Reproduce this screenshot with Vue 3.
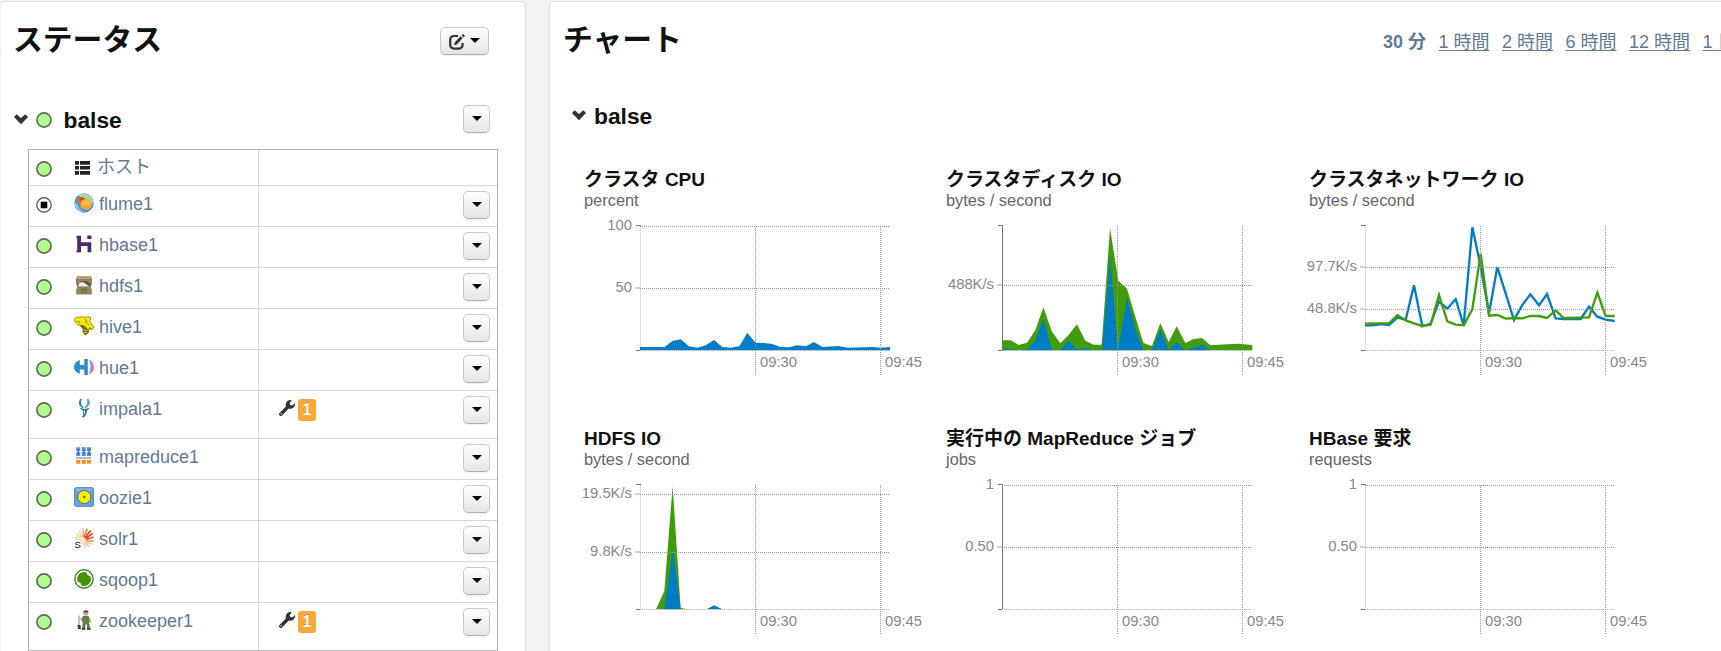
<script setup>
const services = [
  { name: 'ホスト', icon: 'hosts', host: true },
  { name: 'flume1', icon: 'flume', stopped: true },
  { name: 'hbase1', icon: 'hbase' },
  { name: 'hdfs1', icon: 'hdfs' },
  { name: 'hive1', icon: 'hive' },
  { name: 'hue1', icon: 'hue' },
  { name: 'impala1', icon: 'impala', issues: 1 },
  { name: 'mapreduce1', icon: 'mapreduce' },
  { name: 'oozie1', icon: 'oozie' },
  { name: 'solr1', icon: 'solr' },
  { name: 'sqoop1', icon: 'sqoop' },
  { name: 'zookeeper1', icon: 'zookeeper', issues: 1 },
]

const ranges = ['1 時間', '2 時間', '6 時間', '12 時間', '1 日']

// Series points are in thirds of a pixel, measured from the plot's top left corner.
const BASE = 373
const charts = [
  {
    title: 'クラスタ CPU', unit: 'percent',
    lines: [{ y: 0, label: '100' }, { y: 187, label: '50' }],
    areas: [{ color: '#007dc5', points: '0,363 60,363 73,364 97,345 122,340 147,361 172,365 197,358 222,342 247,363 272,365 298,361 322,321 347,350 372,351 397,354 421,363 447,364 472,358 498,361 522,348 547,363 595,360 622,365 697,363 721,365 750,363' }],
  },
  {
    title: 'クラスタディスク IO', unit: 'bytes / second', dark: true,
    lines: [{ y: 178, label: '488K/s' }],
    areas: [
      { color: '#419c0b', points: '0,343 26,343 50,357 75,350 100,313 124,244 150,317 175,352 200,327 225,295 250,344 275,356 299,356 324,6 349,164 375,188 400,272 424,351 450,360 475,291 500,348 524,301 550,351 575,339 600,336 625,358 675,355 708,353 751,357' },
      { color: '#007dc5', points: '0,369 25,369 50,373 75,371 100,344 124,279 150,371 175,373 200,344 225,371 250,366 275,372 300,372 324,87 348,373 375,212 400,310 424,373 450,373 475,310 500,373 524,348 550,373 600,356 625,373' },
    ],
  },
  {
    title: 'クラスタネットワーク IO', unit: 'bytes / second',
    lines: [{ y: 123, label: '97.7K/s' }, { y: 249, label: '48.8K/s' }],
    strokes: [
      { color: '#007dc5', points: '0,298 24,298 47,294 72,297 97,275 122,281 147,178 172,301 197,293 222,227 247,248 272,219 296,298 322,4 347,122 372,262 397,123 422,202 447,282 472,237 496,205 522,238 546,204 572,277 596,279 647,279 672,242 697,272 722,281 749,285' },
      { color: '#419c0b', points: '0,293 44,292 72,292 97,268 122,283 147,292 172,300 197,296 222,207 247,286 272,296 296,298 322,250 347,83 372,269 397,267 422,278 447,276 472,277 496,270 522,270 546,276 572,253 596,276 647,275 672,274 697,200 722,270 749,270' },
    ],
  },
  {
    title: 'HDFS IO', unit: 'bytes / second',
    lines: [{ y: 28, label: '19.5K/s' }, { y: 201, label: '9.8K/s' }],
    areas: [
      { color: '#419c0b', points: '48,373 73,318 98,3 122,369 145,373' },
      { color: '#007dc5', points: '73,373 98,193 122,373 200,373 222,361 247,373' },
    ],
  },
  {
    title: '実行中の MapReduce ジョブ', unit: 'jobs', dark: true,
    lines: [{ y: 0, label: '1' }, { y: 187, label: '0.50' }],
  },
  {
    title: 'HBase 要求', unit: 'requests',
    lines: [{ y: 0, label: '1' }, { y: 187, label: '0.50' }],
  },
]

const closed = (pts) => {
  const list = pts.split(' ')
  const first = list[0].split(',')[0]
  const last = list[list.length - 1].split(',')[0]
  return `${first},${BASE} ${pts} ${last},${BASE}`
}
const snap = (y) => Math.round(y / 3) + 0.5
</script>

<template>
  <div class="page">
    <section class="panel status">
      <header class="head">
        <h1>ステータス</h1>
        <button class="btn edit">
          <svg width="16" height="16" viewBox="0 0 16 16">
            <path d="M9 2H5.200Q1.200 2 1.200 6v4.600q0 4 4 4h4.400q4 0 4-4V9" fill="none" stroke="#333" stroke-width="2.200" />
            <path d="M5 11.200l.9-3L11.600 2.300l2 2L8 10.200z" fill="#333" />
            <path d="M12.600 1.400L14 0l2 2-1.400 1.400z" fill="#333" />
          </svg>
          <i class="caret"></i>
        </button>
      </header>

      <div class="cluster">
        <svg class="chev" width="14" height="11" viewBox="0 0 14 11"><path d="M0 3L2.700.2 7 4 11.300.2 14 3 7 10.200z" fill="#333" /></svg>
        <svg class="dot" width="16" height="16" viewBox="0 0 16 16"><circle cx="8" cy="8" r="7.100" fill="#b0fc90" stroke="#5d6b58" stroke-width="1.700" /></svg>
        <h2>balse</h2>
        <button class="btn"><i class="caret"></i></button>
      </div>

      <div class="table">
        <div v-for="s in services" :key="s.name" class="row" :class="{ host: s.host, tall: s.issues }">
          <div class="cell name">
            <svg class="dot" width="16" height="16" viewBox="0 0 16 16">
              <template v-if="s.stopped">
                <circle cx="8" cy="8" r="7.200" fill="#fff" stroke="#666" stroke-width="1.400" />
                <rect x="4.700" y="4.700" width="6.600" height="6.600" fill="#000" />
              </template>
              <circle v-else cx="8" cy="8" r="7.100" fill="#b0fc90" stroke="#5d6b58" stroke-width="1.700" />
            </svg>

            <svg class="icon" width="20" height="20" viewBox="0 0 20 20">
              <g v-if="s.icon === 'hosts'" fill="#222">
                <path d="M1 2h4v3.800H1zM6 2h10v3.800H6zM1 7h4v3.600H1zM6 7h10v3.600H6zM1 12h4v3.800H1zM6 12h10v3.800H6z" />
              </g>
              <g v-else-if="s.icon === 'flume'">
                <circle cx="10" cy="10" r="9.700" fill="#3f93df" />
                <path d="M4 2.500Q10-1.500 16 2.500 20 6.500 19.500 11L11 8z" fill="#b5d3a0" />
                <path d="M1 9q3 2 4 6l5 4q-7 0-9-6z" fill="#7cc4fa" />
                <ellipse cx="7.300" cy="7.500" rx="4.800" ry="3.500" fill="#d9782a" />
                <path d="M4 4.600q3-1 6 1.400l-3 2z" fill="#b5571d" />
                <ellipse cx="12" cy="11.600" rx="5.800" ry="5.300" fill="#f8a52a" />
                <ellipse cx="12" cy="10" rx="4" ry="2.500" fill="#fdbf4e" />
              </g>
              <g v-else-if="s.icon === 'hbase'" fill="#4b2b6f">
                <path d="M3.200 2h3.800v6.200h10.300V18.300h-3.800v-6.200H7v6.200H3.200z" />
                <rect x="13.300" y="1.400" width="4.200" height="3.600" rx=".6" />
                <path d="M2.500 1.700h4.500V4H2.500zM2.500 16.300H7v2H2.500z" />
              </g>
              <g v-else-if="s.icon === 'hdfs'">
                <path d="M3.500 1h13L18 3.500V9l-1 2v2l.8 1.500v5H2.200v-5L3 13v-2L2 9V3.500z" fill="#94825c" />
                <path d="M3.500 1h13L18 4H2z" fill="#b3a27a" />
                <path d="M3.800 9Q10 2.500 16.200 9v2.500H3.800z" fill="#5b5038" />
                <path d="M5.500 7.500l4-.3 6 4.300H4z" fill="#e8edf5" />
                <path d="M7 14.500h6M7 17h6" stroke="#6b5c3b" stroke-width="1" />
              </g>
              <g v-else-if="s.icon === 'hive'">
                <path d="M9.500 12Q8 14 8.500 15.500l2.500 4q2.500-.5 4-3.500l-1-5z" fill="#6a6512" />
                <path d="M9.500 14l4 .5M10 16.500l3.500.3" stroke="#e6dd0a" stroke-width="1" />
                <path d="M5 8.500l5.500.5 3 3-1 1.500-4-.5z" fill="#6f6a10" />
                <path d="M.5 3.500Q1.500.2 5.500 1.200 8-.2 10.500 1.600 14-.4 16.500 1.500 17.500 3 15.500 5q2 1.200 1.800 3.500 3 .8 2.400 3.700-1 1.600-3.200 1-3 1-4.200-1.200Q11 10 9.500 9.500L5 9.200Q.5 7.500.5 3.500z" fill="#f5e905" stroke="#77701a" stroke-width=".7" />
                <path d="M11 3q2 2 1 4M13.500 7.500l1.300 1.300M15 12l2.500.3M3 5l3 1.500" fill="none" stroke="#4d4a12" stroke-width=".8" />
              </g>
              <g v-else-if="s.icon === 'hue'">
                <path d="M5.800 3V8h4.500V2h3.500v16h-3.500v-5.500H5.800v4.500Q0 14.800 0 10T5.800 3z" fill="#2f8bc9" />
                <path d="M14.800 2.500Q20 4.500 20 10t-5.200 7.500q1.500-3 1.500-7.500t-1.500-7.500z" fill="#aa8cc5" />
              </g>
              <g v-else-if="s.icon === 'impala'">
                <path d="M6 1Q3.800 5.500 6 8l3 2.800.8-1.200Q7.500 8 7.200 5.500T7.800 1z" fill="#278aa9" />
                <path d="M14.500 1q2.800 4-.3 7l-2.700 2.500-.8-1.200Q13 7.500 13.200 5T13 1z" fill="#4aa7bf" />
                <path d="M5 9.500l4 1.300 2.300.2L16 9.500l-2.800 3-.9 3.700L10 19.500l-2.200-.8 1.500-1.500-.4-4.500z" fill="#26799a" />
                <path d="M10.300 12l.5 4" stroke="#bfe4ee" stroke-width="1" />
              </g>
              <g v-else-if="s.icon === 'mapreduce'">
                <g fill="#4b8eee"><path d="M2.200 1.300h4v3.800h-4zM7.800 1.300h4v3.800h-4zM13 1.300h4v3.800h-4zM2.200 6.200h4V10h-4zM7.800 6.200h4V10h-4zM13 6.200h4V10h-4z" /></g>
                <path d="M4.200 4v4M9.800 4v4M15 4v4" stroke="#253a5c" stroke-width=".9" />
                <path d="M2 12h15.300" stroke="#8b99a5" stroke-width="1.300" />
                <path d="M2.200 14h4v3.800h-4zM7.800 14h4v3.800h-4zM13 14h4v3.800h-4z" fill="#fb8b1b" />
              </g>
              <g v-else-if="s.icon === 'oozie'">
                <rect x=".4" y=".4" width="19.200" height="19.200" rx="2.400" fill="#66a3e6" stroke="#3e78bd" stroke-width=".8" />
                <path d="M1.500 1.500h17L10 10z" fill="#84b8f0" />
                <circle cx="10.300" cy="10" r="6.600" fill="#f8ee08" stroke="#536b50" stroke-width="1" />
                <circle cx="10.300" cy="10" r="1.300" fill="#46772d" />
              </g>
              <g v-else-if="s.icon === 'solr'" fill="none" stroke-width="1.600">
                <path d="M8 13L.6 9.500M8 13L2.500 5M8 13L5.500 1.800" stroke="#f6d6a5" />
                <path d="M8 13L9.600.5" stroke="#efb878" />
                <path d="M8 13L13.300.6" stroke="#e17a48" />
                <path d="M8 13l8.700-10.400" stroke="#d8361b" />
                <path d="M8 13l10.700-7.600" stroke="#d5301a" />
                <path d="M8 13l11.500-4" stroke="#dc5b32" />
                <path d="M8 13h11.500" stroke="#e89056" />
                <path d="M8 13l10.500 3.200M8 13l7.500 5.500M8 13l3.500 6.500" stroke="#f2cc9d" />
                <circle cx="8.500" cy="12.500" r="3.500" fill="#fbe7c6" stroke="none" />
                <text x=".4" y="19.500" class="solr-s">S</text>
              </g>
              <g v-else-if="s.icon === 'sqoop'">
                <circle cx="10" cy="10" r="9.200" fill="#fff" stroke="#3a8a1a" stroke-width="1.400" />
                <circle cx="10" cy="10" r="7" fill="#468f08" />
                <path d="M12.500 2.500l.5 2.800 1.500 1.500 2.800.4-1-3zM7.500 17.500L7 14.800l-1.500-1.500-2.800-.4 1 3z" fill="#fff" />
              </g>
              <g v-else>
                <path d="M5 5.500V17" stroke="#a68058" stroke-width="1" />
                <path d="M3.500 15h3l.3 4H4z" fill="#49301f" />
                <circle cx="11.800" cy="3.300" r="2.500" fill="#dba77c" />
                <path d="M9.300 2.500q0-2.300 2.600-2.300t2.700 2.300z" fill="#424f5a" />
                <path d="M9 6h5.600l2 4-1.600 3v1.500h-6.300V12L7 10z" fill="#56834e" />
                <path d="M5 9l3.500.2M15.300 8l1.300 5" stroke="#dba77c" stroke-width="1.300" />
                <path d="M8.700 14h2.600v5H8zM13 14h2.400l.6 5h-3z" fill="#4f7b4a" />
                <path d="M7.600 18.300h3.600v1.400H7.600zM13 18.300h3.700v1.400H13z" fill="#31372b" />
              </g>
            </svg>
            <a>{{ s.name }}</a>
          </div>
          <div class="cell actions">
            <template v-if="s.issues">
              <svg class="wrench" width="16" height="16" viewBox="0 0 16 16">
                <path d="M1.800 14.200L8.600 7.200" stroke="#333" stroke-width="3.500" stroke-linecap="round" />
                <path d="M12.800.3L10.600 3l.7 2.100 2.200.3L15.800 3q.7 3-1.400 4.800-2 1.500-4.600.7L6.800 6.200Q6.300 3.200 8 1.500 10.200-.4 12.800.3z" fill="#333" />
                <circle cx="2.200" cy="13.800" r=".8" fill="#ccc" />
              </svg>
              <span class="badge">{{ s.issues }}</span>
            </template>
            <button v-if="!s.host" class="btn"><i class="caret"></i></button>
          </div>
        </div>
      </div>
    </section>

    <section class="panel charts">
      <header class="head">
        <h1>チャート</h1>
        <nav>
          <b>30 分</b>
          <a v-for="r in ranges" :key="r">{{ r }}</a>
        </nav>
      </header>
      <div class="cluster">
        <svg class="chev" width="14" height="11" viewBox="0 0 14 11"><path d="M0 3L2.700.2 7 4 11.300.2 14 3 7 10.200z" fill="#333" /></svg>
        <h2>balse</h2>
      </div>
      <div class="grid">
        <article v-for="c in charts" :key="c.title">
          <h3>{{ c.title }}</h3>
          <p>{{ c.unit }}</p>
          <svg class="plot" width="345" height="165">
            <g transform="translate(56,10)">
              <path d="M.5 0V125" :stroke="c.dark ? '#777' : '#ddd'" />
              <path d="M-4 -.5H1M-4 124.500H1" stroke="#777" />
              <g transform="scale(.33333)">
                <polygon v-for="a in c.areas" :key="a.color" :points="closed(a.points)" :fill="a.color" />
                <polyline v-for="a in c.strokes" :key="a.color" :points="a.points" fill="none" :stroke="a.color" stroke-width="7" />
              </g>
              <g v-for="l in c.lines" :key="l.y">
                <path :d="`M0 ${snap(l.y)}H250`" class="dash" />
                <path v-if="l.y" :d="`M-5 ${snap(l.y) - .5}H0`" stroke="#d2d2d2" stroke-width="2" />
                <text x="-8" :y="l.y / 3 + 4" text-anchor="end">{{ l.label }}</text>
              </g>
              <path d="M0 124.500H250" class="dash faint" />
              <path d="M115.500 0V150M240.500 0V150" class="dash" />
              <text x="120" y="140.700">09:30</text>
              <text x="245" y="140.700">09:45</text>
            </g>
          </svg>
        </article>
      </div>
    </section>
  </div>
</template>

<style>
body { background: #f3f3f3; overflow: hidden; }
</style>

<style scoped>
.page {
  display: flex;
  gap: 23px;
  width: 1721px;
  height: 651px;
  padding-top: 1px;
  box-sizing: border-box;
  overflow: hidden;
  background: #f3f3f3;
  color: #111;
  font: 18px/20px "Liberation Sans", "Noto Sans CJK JP", sans-serif;
}
.panel {
  box-sizing: border-box;
  height: 670px;
  flex: none;
  background: #fff;
  border: 1px solid #ddd;
  border-radius: 5px;
}
.status { width: 526px; border-left-color: #f0f0f0; }
.charts { width: 1190px; }
h1, h2, h3, p { margin: 0; }
h1 { font-size: 29.800px; line-height: 40px; font-weight: 700; }
h2 { font-size: 22.800px; line-height: 28px; font-weight: 700; }
.head { display: flex; justify-content: space-between; height: 56px; padding-top: 18px; }
.status .head { padding-left: 12px; padding-right: 36px; }
.charts .head { padding-left: 13px; }
.btn {
  display: flex;
  align-items: center;
  justify-content: center;
  box-sizing: border-box;
  width: 27px;
  height: 28px;
  padding: 0;
  border: 1px solid #c9c9c9;
  border-bottom-color: #b0b0b0;
  border-radius: 5px;
  background: linear-gradient(#fff, #e5e5e5);
  box-shadow: 0 1px 1px rgba(0, 0, 0, .06);
}
.btn .caret { margin-top: -2px; }
.edit { width: 49px; margin-top: 7px; gap: 5px; }
.edit svg { margin-top: 2px; }
.caret { border: 5px solid transparent; border-top-color: #000; border-bottom: 0; }
.cluster { display: flex; align-items: center; height: 28px; }
.status .cluster { margin-top: 29px; padding: 0 35px 0 13px; }
.status .cluster .dot { margin: 1px 0 0 8px; }
.status h2 { margin-left: 11.500px; padding-top: 2px; flex: 1; }
.charts .cluster { margin-top: 25px; padding-left: 22px; }
.charts h2 { margin-left: 8px; padding-top: 1px; }
.chev, .dot, .icon, .wrench { display: block; flex: none; }

.table {
  width: 470px;
  box-sizing: border-box;
  margin: 16px 0 0 27px;
  border: 1px solid #b4b4b4;
}
.row { display: flex; height: 40px; border-top: 1px solid #d6d6d6; }
.row.host { height: 35px; border-top: 0; }
.row.tall { height: 47px; }
.cell { display: flex; align-items: flex-start; box-sizing: border-box; }
.name { width: 230px; border-right: 1px solid #d6d6d6; padding-left: 7px; }
.name .dot { margin-top: 10.700px; }
.name .icon { margin: 7px 0 0 22px; }
.name a { margin: 8px 0 0 5px; color: #627a93; white-space: nowrap; }
.host .icon { margin-top: 9px; }
.host a { margin-left: 3px; margin-top: 7px; }
.actions { flex: 1; padding: 5px 7px 0 20px; }
.actions .btn { margin-left: auto; }
.wrench { margin-top: 4px; }
.badge {
  width: 18px;
  height: 22px;
  margin: 3px 0 0 3px;
  border-radius: 3px;
  background: #faa937;
  color: #fff;
  font-size: 16px;
  line-height: 22px;
  font-weight: 700;
  text-align: center;
  text-shadow: 0 -1px 0 rgba(0, 0, 0, .25);
}

nav { display: flex; gap: 12.500px; width: 355px; margin-top: 12px; color: #627a93; white-space: nowrap; }
nav a { flex: none; text-decoration: underline; text-underline-offset: 2px; text-decoration-thickness: 1px; }
nav b { flex: none; }

.grid {
  display: grid;
  grid-template-columns: 362px 363px 362px;
  grid-auto-rows: 259px;
  margin: 40px 0 0 34px;
}
.grid h3 { font-size: 19px; line-height: 22px; white-space: nowrap; }
.grid p { margin-top: -1px; font-size: 16.400px; line-height: 20px; color: #666; }
.plot { display: block; margin-top: 6px; overflow: visible; }
.plot text { font-size: 14.800px; fill: #888; }
.dash { fill: none; stroke: #999; stroke-dasharray: 1 1; shape-rendering: crispEdges; }
.faint { stroke: #b5b5b5; }
.solr-s { font-size: 9.500px; fill: #111; stroke: none; }
</style>
